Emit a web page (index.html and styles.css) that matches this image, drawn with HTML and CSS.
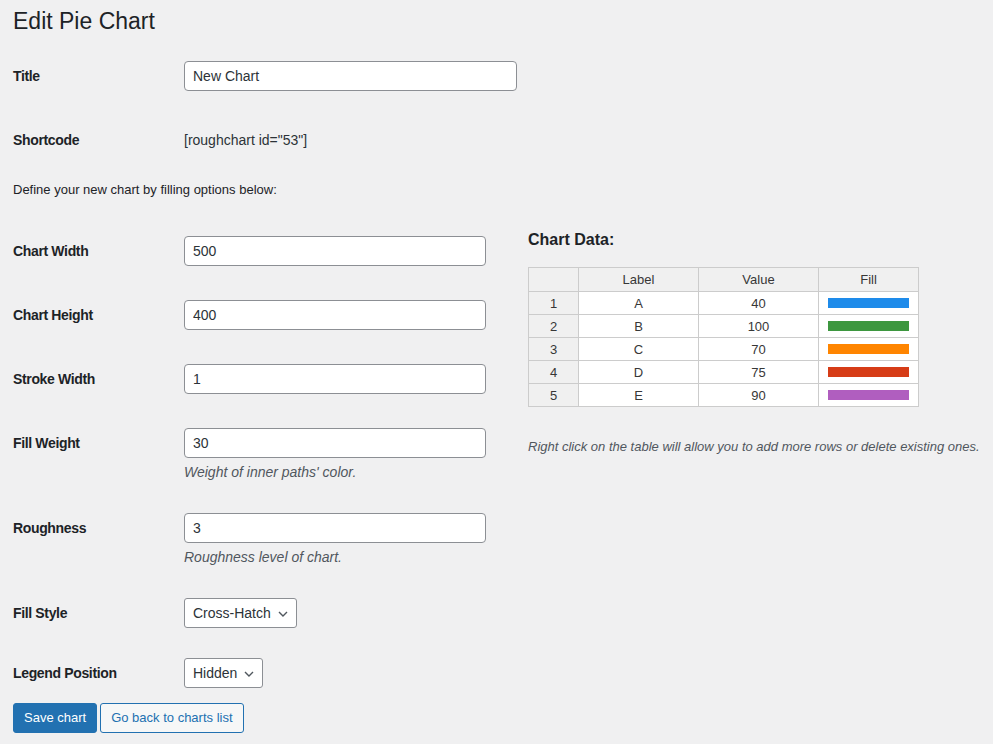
FILE: index.html
```html
<!DOCTYPE html>
<html lang="en">
<head>
<meta charset="utf-8">
<title>Edit Pie Chart</title>
<link rel="stylesheet" href="styles.css">
</head>
<body>
<div class="wrap">
  <h1 class="page-title">Edit Pie Chart</h1>

  <div class="row">
    <div class="label">Title</div>
    <div class="field"><input class="text-input wide" type="text" value="New Chart"></div>
  </div>
  <div class="row">
    <div class="label">Shortcode</div>
    <div class="field static">[roughchart id="53"]</div>
  </div>

  <p class="intro">Define your new chart by filling options below:</p>

  <div class="columns">
    <div class="left">
      <div class="row">
        <div class="label">Chart Width</div>
        <div class="field"><input class="text-input" type="text" value="500"></div>
      </div>
      <div class="row">
        <div class="label">Chart Height</div>
        <div class="field"><input class="text-input" type="text" value="400"></div>
      </div>
      <div class="row">
        <div class="label">Stroke Width</div>
        <div class="field"><input class="text-input" type="text" value="1"></div>
      </div>
      <div class="row">
        <div class="label">Fill Weight</div>
        <div class="field">
          <input class="text-input" type="text" value="30">
          <p class="description">Weight of inner paths' color.</p>
        </div>
      </div>
      <div class="row">
        <div class="label">Roughness</div>
        <div class="field">
          <input class="text-input" type="text" value="3">
          <p class="description">Roughness level of chart.</p>
        </div>
      </div>
      <div class="row select-row">
        <div class="label">Fill Style</div>
        <div class="field">
          <div class="select"><span>Cross-Hatch</span><svg width="10" height="6" viewBox="0 0 10 6"><polyline points="1,1 5,5 9,1" fill="none" stroke="#50575e" stroke-width="1.4"/></svg></div>
        </div>
      </div>
      <div class="row select-row">
        <div class="label">Legend Position</div>
        <div class="field">
          <div class="select"><span>Hidden</span><svg width="10" height="6" viewBox="0 0 10 6"><polyline points="1,1 5,5 9,1" fill="none" stroke="#50575e" stroke-width="1.4"/></svg></div>
        </div>
      </div>
      <div class="actions">
        <button class="btn primary" type="button">Save chart</button>
        <button class="btn secondary" type="button">Go back to charts list</button>
      </div>
    </div>

    <div class="right">
      <h2 class="data-title">Chart Data:</h2>
      <table class="data-table">
        <colgroup><col class="c-num"><col class="c-label"><col class="c-value"><col class="c-fill"></colgroup>
        <thead>
          <tr><th></th><th>Label</th><th>Value</th><th>Fill</th></tr>
        </thead>
        <tbody>
          <tr><th>1</th><td>A</td><td>40</td><td><span class="swatch" style="background:#1e8bea"></span></td></tr>
          <tr><th>2</th><td>B</td><td>100</td><td><span class="swatch" style="background:#3d973f"></span></td></tr>
          <tr><th>3</th><td>C</td><td>70</td><td><span class="swatch" style="background:#ff8500"></span></td></tr>
          <tr><th>4</th><td>D</td><td>75</td><td><span class="swatch" style="background:#d63c17"></span></td></tr>
          <tr><th>5</th><td>E</td><td>90</td><td><span class="swatch" style="background:#b05ebf"></span></td></tr>
        </tbody>
      </table>
      <p class="note">Right click on the table will allow you to add more rows or delete existing ones.</p>
    </div>
  </div>
</div>
</body>
</html>
```

FILE: styles.css
```css
* { box-sizing: border-box; }

html, body {
  margin: 0;
  padding: 0;
  background: #f0f0f1;
}

body {
  font-family: "Liberation Sans", Arial, sans-serif;
  font-size: 13px;
  color: #1d2327;
  width: 993px;
  height: 744px;
  overflow: hidden;
}

.wrap {
  padding: 0 0 0 13px;
}

.page-title {
  margin: 0;
  padding: 6px 0 8px;
  font-size: 23px;
  line-height: 30px;
  font-weight: 400;
  color: #1d2327;
}

.row {
  display: flex;
  align-items: flex-start;
  padding: 17px 0;
}

.select-row {
  padding: 17px 0 13px;
}

.label {
  width: 171px;
  flex: none;
  font-size: 14px;
  letter-spacing: -0.35px;
  font-weight: 700;
  line-height: 30px;
  color: #1d2327;
}

.field {
  display: flex;
  flex-direction: column;
  align-items: flex-start;
}

.field.static {
  font-size: 14px;
  line-height: 30px;
  color: #2c3338;
}

.text-input {
  width: 302px;
  height: 30px;
  margin: 0;
  padding: 0 8px;
  border: 1px solid #8c8f94;
  border-radius: 4px;
  background: #fff;
  font-family: inherit;
  font-size: 14px;
  color: #2c3338;
  outline: none;
}

.text-input.wide {
  width: 333px;
}

.description {
  margin: 7px 0 0;
  font-size: 14px;
  line-height: 14px;
  font-style: italic;
  color: #50575e;
}

.intro {
  margin: 8px 0 19px;
  font-size: 13px;
  line-height: 20px;
  color: #1d2327;
}

.columns {
  display: flex;
  align-items: flex-start;
}

.left {
  width: 515px;
  flex: none;
}

.right {
  flex: 1;
}

.select {
  display: inline-flex;
  align-items: center;
  gap: 7px;
  height: 30px;
  padding: 0 8px 0 8px;
  border: 1px solid #8c8f94;
  border-radius: 3px;
  background: #fff;
  font-size: 14px;
  color: #2c3338;
}

.select svg {
  display: block;
  margin-top: 1px;
}

.actions {
  display: flex;
  gap: 3px;
  margin-top: 2px;
}

.btn {
  height: 30px;
  margin: 0;
  padding: 0 10px;
  border-radius: 3px;
  font-family: inherit;
  font-size: 13px;
  line-height: 28px;
  cursor: pointer;
}

.btn.primary {
  background: #2271b1;
  border: 1px solid #2271b1;
  color: #fff;
}

.btn.secondary {
  background: #f6f7f7;
  border: 1px solid #2271b1;
  color: #2271b1;
}

.data-title {
  margin: 10px 0 16px;
  font-size: 16px;
  line-height: 22px;
  font-weight: 700;
  color: #1d2327;
}

.data-table {
  border-collapse: collapse;
  table-layout: fixed;
  width: 390px;
  font-size: 13px;
  color: #373737;
  background: #fff;
}

.data-table .c-num { width: 50px; }
.data-table .c-label { width: 120px; }
.data-table .c-value { width: 120px; }
.data-table .c-fill { width: 100px; }

.data-table th,
.data-table td {
  border: 1px solid #cccccc;
  padding: 0;
  height: 23px;
  line-height: 21px;
  text-align: center;
  font-weight: 400;
}

.data-table thead th {
  height: 24px;
  background: #f0f0f0;
}

.data-table tbody th {
  background: #f0f0f0;
}

.data-table td {
  background: #fff;
}

.swatch {
  display: block;
  width: 81px;
  height: 10px;
  margin: 0 auto;
}

.note {
  margin: 31px 0 0;
  font-size: 13px;
  line-height: 18px;
  font-style: italic;
  color: #50575e;
}
```
